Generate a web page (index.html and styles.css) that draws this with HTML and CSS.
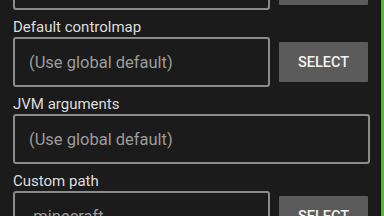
FILE: index.html
```html
<!DOCTYPE html>
<html>
<head>
<meta charset="utf-8">
<link rel="stylesheet" href="styles.css">
</head>
<body>
<div class="screen">
  <div class="content">
    <div class="form">
      <div class="field first">
        <div class="row">
          <div class="input"></div>
          <div class="btn"></div>
        </div>
      </div>
      <div class="field">
        <div class="label">Default controlmap</div>
        <div class="row">
          <div class="input"><span class="placeholder">(Use global default)</span></div>
          <div class="btn">SELECT</div>
        </div>
      </div>
      <div class="field">
        <div class="label">JVM arguments</div>
        <div class="row">
          <div class="input"><span class="placeholder">(Use global default)</span></div>
        </div>
      </div>
      <div class="field">
        <div class="label">Custom path</div>
        <div class="row">
          <div class="input"><span class="placeholder">.minecraft</span></div>
          <div class="btn">SELECT</div>
        </div>
      </div>
    </div>
  </div>
  <div class="edge"></div>
</div>
</body>
</html>
```

FILE: styles.css
```css
html, body {
  margin: 0;
  padding: 0;
  background: #1b1b1b;
  overflow: hidden;
}
.screen {
  display: flex;
  width: 384px;
  height: 216px;
  overflow: hidden;
  font-family: Roboto, "Noto Sans", sans-serif;
}
.content {
  flex: 1;
  overflow: hidden;
  padding-left: 13px;
  padding-right: 10px;
}
.form {
  display: flex;
  flex-direction: column;
  margin-top: -40px;
}
.label {
  font-size: 15px;
  line-height: 20px;
  color: #dedede;
  margin-top: 7px;
}
.row {
  display: flex;
  align-items: center;
  gap: 9px;
}
.input {
  flex: 1;
  height: 46px;
  border: 2px solid #8b8b8b;
  border-radius: 3px;
  display: flex;
  align-items: center;
  padding-left: 14px;
  font-size: 16.5px;
  color: #9c9c9c;
}
.btn {
  width: 89px;
  height: 40px;
  margin-right: 2px;
  background: #5b5b5b;
  color: #f2f2f2;
  font-size: 14.5px;
  font-weight: 500;
  display: flex;
  align-items: center;
  justify-content: center;
  border-radius: 1px;
}
.edge {
  width: 3px;
  border-left: 1px solid #101010;
  background: #4fc12c;
}
```
